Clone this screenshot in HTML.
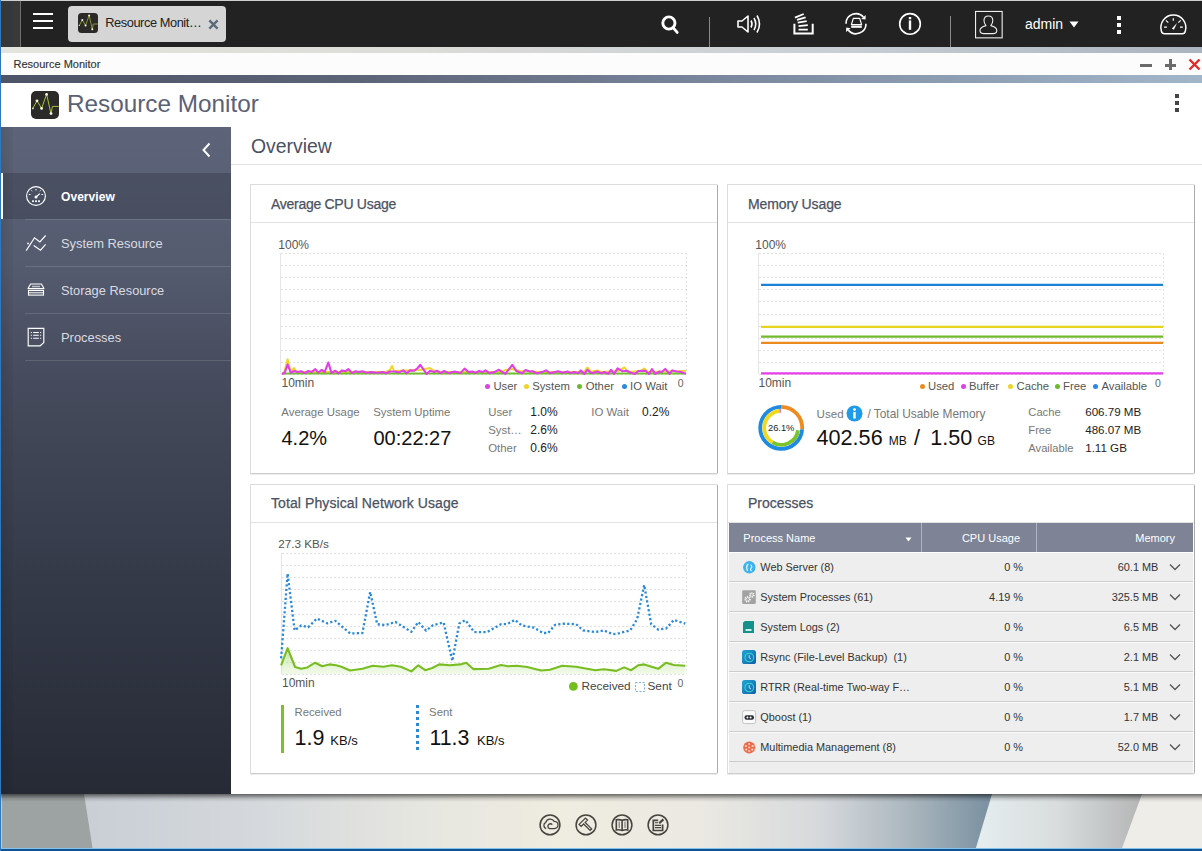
<!DOCTYPE html>
<html><head><meta charset="utf-8"><style>
html,body{margin:0;padding:0;}
body{width:1202px;height:851px;position:relative;overflow:hidden;background:#fff;font-family:"Liberation Sans",sans-serif;}
.r{position:absolute;}
.t{position:absolute;white-space:nowrap;}
</style></head><body>
<div class="r" style="left:0px;top:794px;width:1202px;height:57px;background:linear-gradient(to right,#c4cad2 0px,#d4d8dc 250px,#e6e6e0 420px,#efece0 560px,#ebe9e2 700px,#d6d9dc 820px,#aab6be 910px,#7d93a3 985px);"></div>
<svg class="r" style="left:0;top:794px" width="1202" height="57"><defs><linearGradient id="wg2" x1="0" x2="1"><stop offset="0" stop-color="#e6eef0"/><stop offset="0.5" stop-color="#d8dcdc"/><stop offset="1" stop-color="#b4b6b6"/></linearGradient></defs><polygon points="2,0 84,0 93,57 2,57" fill="#9da3a3"/><polygon points="992,0 1143,0 1122,57 975,57" fill="url(#wg2)"/><polygon points="1142,0 1202,0 1202,57 1121,57" fill="#eeede8"/></svg>
<div class="r" style="left:0px;top:794px;width:1202px;height:8px;background:linear-gradient(to bottom,rgba(0,0,0,0.55),rgba(0,0,0,0.12) 60%,rgba(0,0,0,0));"></div>
<div class="r" style="left:0px;top:848px;width:1202px;height:1.5px;background:#86c0ec;"></div>
<div class="r" style="left:0px;top:849px;width:1202px;height:2px;background:#0c5494;"></div>
<div class="r" style="left:0px;top:0px;width:1202px;height:1px;background:#cfcfcf;"></div>
<div class="r" style="left:0px;top:1px;width:1202px;height:45.6px;background:#222222;"></div>
<div class="r" style="left:1px;top:1px;width:19px;height:45.6px;background:linear-gradient(to right,#3a3634,#3c3530 20%,#2f3944 45%,#3d3834 70%,#383a3c);"></div>
<div class="r" style="left:20px;top:1px;width:1px;height:45.6px;background:#6e6e6e;"></div>
<div class="r" style="left:33px;top:12.7px;width:19.5px;height:2.2px;background:#fff;"></div>
<div class="r" style="left:33px;top:19.7px;width:19.5px;height:2.2px;background:#fff;"></div>
<div class="r" style="left:33px;top:26.8px;width:19.5px;height:2.2px;background:#fff;"></div>
<div class="r" style="left:68px;top:6px;width:158px;height:36px;background:#d5d5d5;border-radius:4px;"></div>
<svg class="r" style="left:78px;top:13px" width="20" height="20" viewBox="0 0 28 28"><rect x="0" y="0" width="28" height="28" rx="5" fill="#2b2a28"/><polyline points="1.8,17.4 6,9.8 10.6,17.4 15.6,3.2 20,22.8 21.4,15.4 27.8,15.4" fill="none" stroke="#a6c03e" stroke-width="1"/><circle cx="6" cy="9.8" r="1.4" fill="#f4f8e0"/><circle cx="10.6" cy="17.4" r="1.4" fill="#f4f8e0"/><circle cx="15.6" cy="3.4" r="1.4" fill="#f4f8e0"/><circle cx="20" cy="22.6" r="1.4" fill="#f4f8e0"/><circle cx="1.9" cy="17.4" r="0.9" fill="#d8e4b0"/></svg>
<div class="t" style="left:105.2px;top:15px;font-size:12.8px;line-height:15px;color:#222;font-weight:normal;letter-spacing:-0.42px;">Resource Monit…</div>
<svg class="r" style="left:209px;top:20px;overflow:visible" width="9" height="9" viewBox="0 0 9 9"><path d="M1.2 1.2 L7.8 7.8 M7.8 1.2 L1.2 7.8" stroke="#5b6b7b" stroke-width="2.4" stroke-linecap="square"/></svg>
<svg class="r" style="left:661px;top:14.6px;overflow:visible" width="20" height="20" viewBox="0 0 20 20"><circle cx="7.9" cy="8" r="6.1" fill="none" stroke="#fff" stroke-width="2.9"/><path d="M12.3 12.8 L16.2 17.4" stroke="#fff" stroke-width="2.8" stroke-linecap="round"/></svg>
<div class="r" style="left:709px;top:16.7px;width:1.2px;height:29.9px;background:#8a8a8a;"></div>
<svg class="r" style="left:736px;top:13px;overflow:visible" width="27" height="22" viewBox="0 0 27 22"><path d="M2 8 H6 L12 3 V19 L6 14 H2 Z" fill="none" stroke="#fff" stroke-width="1.6" stroke-linejoin="round"/><path d="M15 7.5 Q17 11 15 14.5" fill="none" stroke="#fff" stroke-width="1.6"/><path d="M18 5 Q21.5 11 18 17" fill="none" stroke="#fff" stroke-width="1.6"/><path d="M21 2.5 Q26 11 21 19.5" fill="none" stroke="#fff" stroke-width="1.6"/></svg>
<svg class="r" style="left:793px;top:13px;overflow:visible" width="22" height="22" viewBox="0 0 22 22"><path d="M1.4 10.8 V20.4 H19.7 V10.8" fill="none" stroke="#fff" stroke-width="2"/><path d="M5.5 16.7 H14.8 M5.5 13.1 L14.8 12.2 M4.7 9.7 L13.7 8.1 M4 6.8 L12.6 4.4 M1.9 4.6 L10.7 1" stroke="#fff" stroke-width="1.8"/></svg>
<svg class="r" style="left:844px;top:12px;overflow:visible" width="25" height="24" viewBox="0 0 25 24"><path d="M2.00 11.70 A10 10 0 0 1 19.43 5.01" fill="none" stroke="#fff" stroke-width="1.6"/><path d="M22.00 11.70 A10 10 0 0 1 4.34 18.13" fill="none" stroke="#fff" stroke-width="1.6"/><polygon points="21.64,7.46 21.66,3.00 17.20,7.02" fill="#fff"/><polygon points="2.22,15.60 2.04,20.06 6.64,16.20" fill="#fff"/><path d="M9.3 6.4 H15.7 L17.6 12.6 H7.4 Z" fill="none" stroke="#fff" stroke-width="1.2" stroke-linejoin="round"/><rect x="7.2" y="13.6" width="10.6" height="2.2" fill="#fff"/></svg>
<svg class="r" style="left:898px;top:12px;overflow:visible" width="24" height="24" viewBox="0 0 24 24"><circle cx="12" cy="11.9" r="10.3" fill="none" stroke="#fff" stroke-width="1.6"/><rect x="10.8" y="8.4" width="2.4" height="9.4" fill="#fff"/><rect x="10.8" y="5" width="2.4" height="2.3" fill="#fff"/></svg>
<div class="r" style="left:950px;top:16.3px;width:1.2px;height:30.3px;background:#8a8a8a;"></div>
<svg class="r" style="left:975px;top:11px;overflow:visible" width="28" height="27" viewBox="0 0 28 27"><rect x="0.55" y="0.45" width="26.6" height="26.4" fill="none" stroke="#eee" stroke-width="1.1"/><path d="M11 14.6 C9.5 13 9 11.5 9 9.5 C9 6.7 11 5 13.4 5 C15.8 5 17.8 6.7 17.8 9.5 C17.8 11.5 17.3 13 15.8 14.6 C19.5 15.5 21.8 17.5 21.8 19.6 C21.8 21.6 20.5 22.6 18.5 22.6 H8.3 C6.3 22.6 5 21.6 5 19.6 C5 17.5 7.3 15.5 11 14.6 Z" fill="none" stroke="#eee" stroke-width="1.1" stroke-linejoin="round"/></svg>
<div class="t" style="left:1025px;top:16px;font-size:14px;line-height:16px;color:#fff;font-weight:normal;">admin</div>
<svg class="r" style="left:1069px;top:21px;overflow:visible" width="10" height="7" viewBox="0 0 10 7"><path d="M0.5 0.5 H9.5 L5 6.5 Z" fill="#fff"/></svg>
<div class="r" style="left:1117px;top:16px;width:4px;height:4px;background:#fff;"></div>
<div class="r" style="left:1117px;top:23px;width:4px;height:4px;background:#fff;"></div>
<div class="r" style="left:1117px;top:30px;width:4px;height:4px;background:#fff;"></div>
<svg class="r" style="left:1159px;top:13px;overflow:visible" width="29" height="23" viewBox="0 0 29 23"><path d="M5.5 20.8 H23.2 Q25.8 20.8 26.3 18.2 A12.5 12.5 0 1 0 2.4 18.2 Q2.9 20.8 5.5 20.8 Z" fill="none" stroke="#fff" stroke-width="1.5" stroke-linejoin="round"/><path d="M14.3 5.3 V7.7 M6.9 7.4 L9.3 9.6 M21.7 7.4 L19.3 9.6 M5.1 14.2 H7.9 M21 14.2 H23.8" stroke="#fff" stroke-width="1.2"/><polygon points="12.9,15.6 14.9,16.7 18,10" fill="#fff"/></svg>
<div class="r" style="left:0px;top:46.6px;width:1202px;height:6.4px;background:linear-gradient(to right,#e4e4de,#dcdcd8 35%,#c8ced4 70%,#aab4c0);"></div>
<div class="r" style="left:0px;top:53px;width:1202px;height:22px;background:#fcfcfc;"></div>
<div class="t" style="left:13.5px;top:58px;font-size:11px;line-height:12px;color:#333;font-weight:normal;-webkit-text-stroke:0.15px #333;">Resource Monitor</div>
<div class="r" style="left:1140px;top:63.5px;width:12px;height:3px;background:#6a6a6a;"></div>
<div class="r" style="left:1165px;top:63.5px;width:11px;height:3px;background:#6a6a6a;"></div>
<div class="r" style="left:1169px;top:59px;width:3px;height:11px;background:#6a6a6a;"></div>
<svg class="r" style="left:1188px;top:58px;overflow:visible" width="13" height="13" viewBox="0 0 13 13"><path d="M1.5 1.5 L11.5 11.5 M11.5 1.5 L1.5 11.5" stroke="#e02a2a" stroke-width="2.4"/></svg>
<div class="r" style="left:0px;top:75px;width:1202px;height:8px;background:linear-gradient(to right,#4e5468,#5c6478 30%,#7a879d 60%,#a2b6ca);"></div>
<div class="r" style="left:0px;top:83px;width:1202px;height:44px;background:#ffffff;"></div>
<svg class="r" style="left:31px;top:91px" width="28" height="28" viewBox="0 0 28 28"><rect x="0" y="0" width="28" height="28" rx="5" fill="#2b2a28"/><polyline points="1.8,17.4 6,9.8 10.6,17.4 15.6,3.2 20,22.8 21.4,15.4 27.8,15.4" fill="none" stroke="#a6c03e" stroke-width="1"/><circle cx="6" cy="9.8" r="1.4" fill="#f4f8e0"/><circle cx="10.6" cy="17.4" r="1.4" fill="#f4f8e0"/><circle cx="15.6" cy="3.4" r="1.4" fill="#f4f8e0"/><circle cx="20" cy="22.6" r="1.4" fill="#f4f8e0"/><circle cx="1.9" cy="17.4" r="0.9" fill="#d8e4b0"/></svg>
<div class="t" style="left:67px;top:90px;font-size:24.3px;line-height:27px;color:#5a6175;font-weight:normal;">Resource Monitor</div>
<div class="r" style="left:1175px;top:94px;width:4px;height:4px;background:#444;"></div>
<div class="r" style="left:1175px;top:101px;width:4px;height:4px;background:#444;"></div>
<div class="r" style="left:1175px;top:108px;width:4px;height:4px;background:#444;"></div>
<div class="r" style="left:0px;top:127px;width:231px;height:667px;background:linear-gradient(to bottom,#5d6479 0px,#555b6f 140px,#474c5e 240px,#353a49 450px,#262a35 667px);"></div>
<div class="r" style="left:1px;top:127px;width:12px;height:667px;background:linear-gradient(to right,rgba(0,0,0,0.10),rgba(0,0,0,0.03));"></div>
<div class="r" style="left:1px;top:173px;width:230px;height:46px;background:rgba(20,24,34,0.22);"></div>
<div class="r" style="left:1px;top:173px;width:2px;height:46px;background:#ffffff;"></div>
<div class="r" style="left:25px;top:219px;width:206px;height:1px;background:rgba(255,255,255,0.13);"></div>
<div class="r" style="left:25px;top:266px;width:206px;height:1px;background:rgba(255,255,255,0.13);"></div>
<div class="r" style="left:25px;top:313px;width:206px;height:1px;background:rgba(255,255,255,0.13);"></div>
<div class="r" style="left:25px;top:360px;width:206px;height:1px;background:rgba(255,255,255,0.13);"></div>
<svg class="r" style="left:201px;top:142px;overflow:visible" width="10" height="16" viewBox="0 0 10 16"><path d="M8.5 1.5 L2.5 8 L8.5 14.5" fill="none" stroke="#fff" stroke-width="2"/></svg>
<svg class="r" style="left:25px;top:185px;overflow:visible" width="22" height="22" viewBox="0 0 22 22"><circle cx="11" cy="10.95" r="9.4" fill="none" stroke="#fff" stroke-width="1.15"/><path d="M11 12 L14.8 8.6" stroke="#fff" stroke-width="1.2"/><circle cx="11" cy="11.9" r="1.5" fill="#fff"/><path d="M11 4.1 V5.6 M3.8 9.5 H5.6 M16.4 9.5 H18.2" stroke="#fff" stroke-width="1.1" opacity="0.9"/><path d="M6.2 5.3 L7.3 6.4 M15.8 5.3 L14.7 6.4" stroke="#fff" stroke-width="1" opacity="0.8"/><rect x="7.1" y="15.3" width="1.8" height="1.8" fill="#fff"/><rect x="10.1" y="15.3" width="1.8" height="1.8" fill="#fff"/><rect x="13.1" y="15.3" width="1.8" height="1.8" fill="#fff"/></svg>
<div class="t" style="left:61px;top:190px;font-size:12.1px;line-height:14px;color:#ffffff;font-weight:bold;">Overview</div>
<svg class="r" style="left:25px;top:234px;overflow:visible" width="22" height="18" viewBox="0 0 22 18"><path d="M1.2 16.6 L9.5 3.8 L14.9 7.9 L20.6 1.5" fill="none" stroke="#fff" stroke-width="1.15"/><path d="M8.7 11.5 L15.5 16.2 L20.6 10.4" fill="none" stroke="#fff" stroke-width="1.15"/><circle cx="3" cy="9.4" r="0.9" fill="#fff"/></svg>
<div class="t" style="left:61px;top:236px;font-size:12.9px;line-height:15px;color:#d9dbe2;font-weight:normal;">System Resource</div>
<svg class="r" style="left:27px;top:282px;overflow:visible" width="18" height="14" viewBox="0 0 18 14"><path d="M1 6.6 L3.6 2 H14.4 L17 6.6 Z" fill="none" stroke="#fff" stroke-width="1.1" stroke-linejoin="round"/><path d="M5 4.5 H13" stroke="#fff" stroke-width="1.6" opacity="0.6"/><rect x="1.5" y="8.5" width="15" height="4.6" fill="none" stroke="#fff" stroke-width="1.1"/><path d="M1.5 10.8 H16.5" stroke="#fff" stroke-width="1"/></svg>
<div class="t" style="left:61px;top:283px;font-size:12.8px;line-height:15px;color:#d9dbe2;font-weight:normal;">Storage Resource</div>
<svg class="r" style="left:27px;top:327px;overflow:visible" width="18" height="20" viewBox="0 0 18 20"><path d="M1.2 1.4 H16.8 V15.6 L13.2 18.8 H1.2 Z" fill="none" stroke="#fff" stroke-width="1.15" stroke-linejoin="miter"/><path d="M3.8 5.5 H4.9 M6.2 5.5 H11.8 M13.1 5.5 H14.2 M3.8 8.3 H4.9 M6.2 8.3 H11.8 M13.1 8.3 H14.2 M3.8 11.3 H4.9 M6.2 11.3 H11.8 M13.1 11.3 H14.2" stroke="#fff" stroke-width="1.1"/></svg>
<div class="t" style="left:61px;top:330px;font-size:12.9px;line-height:15px;color:#d9dbe2;font-weight:normal;">Processes</div>
<div class="r" style="left:231px;top:127px;width:971px;height:667px;background:#ffffff;"></div>
<div class="t" style="left:251px;top:135px;font-size:19.4px;line-height:22px;color:#4a5161;font-weight:normal;">Overview</div>
<div class="r" style="left:231px;top:164px;width:971px;height:1px;background:#e3e3e3;"></div>
<div class="r" style="left:250px;top:184px;width:468px;height:290px;background:#fff;border:1px solid #dcdcdc;border-right-color:#ababab;border-bottom-color:#cdcdcd;border-radius:0 2px 2px 0;box-sizing:border-box;box-shadow:0 1px 0 rgba(0,0,0,0.07);"></div>
<div class="r" style="left:251px;top:222px;width:466px;height:1px;background:#e2e2e2;"></div>
<div class="t" style="left:271px;top:196px;font-size:14px;line-height:16px;color:#4b5262;font-weight:normal;-webkit-text-stroke:0.25px #4b5262;letter-spacing:-0.28px;">Average CPU Usage</div>
<div class="r" style="left:727px;top:184px;width:468px;height:290px;background:#fff;border:1px solid #dcdcdc;border-right-color:#ababab;border-bottom-color:#cdcdcd;border-radius:0 2px 2px 0;box-sizing:border-box;box-shadow:0 1px 0 rgba(0,0,0,0.07);"></div>
<div class="r" style="left:728px;top:222px;width:466px;height:1px;background:#e2e2e2;"></div>
<div class="t" style="left:748px;top:196px;font-size:14px;line-height:16px;color:#4b5262;font-weight:normal;-webkit-text-stroke:0.25px #4b5262;letter-spacing:-0.12px;">Memory Usage</div>
<div class="r" style="left:250px;top:484px;width:468px;height:290px;background:#fff;border:1px solid #dcdcdc;border-right-color:#ababab;border-bottom-color:#cdcdcd;border-radius:0 2px 2px 0;box-sizing:border-box;box-shadow:0 1px 0 rgba(0,0,0,0.07);"></div>
<div class="r" style="left:251px;top:522px;width:466px;height:1px;background:#e2e2e2;"></div>
<div class="t" style="left:271px;top:495px;font-size:14px;line-height:16px;color:#4b5262;font-weight:normal;-webkit-text-stroke:0.25px #4b5262;letter-spacing:0.09px;">Total Physical Network Usage</div>
<div class="r" style="left:727px;top:484px;width:468px;height:290px;background:#fff;border:1px solid #dcdcdc;border-right-color:#ababab;border-bottom-color:#cdcdcd;border-radius:0 2px 2px 0;box-sizing:border-box;box-shadow:0 1px 0 rgba(0,0,0,0.07);"></div>
<div class="r" style="left:728px;top:522px;width:466px;height:1px;background:#e2e2e2;"></div>
<div class="t" style="left:748px;top:495px;font-size:14px;line-height:16px;color:#4b5262;font-weight:normal;-webkit-text-stroke:0.25px #4b5262;letter-spacing:0px;">Processes</div>
<svg class="r" style="left:0;top:0" width="1202" height="851"><line x1="280" y1="253.5" x2="686" y2="253.5" stroke="#e0e0e0" stroke-width="1" stroke-dasharray="2 2" stroke-dashoffset="-1"/><line x1="280" y1="265.5" x2="686" y2="265.5" stroke="#e0e0e0" stroke-width="1" stroke-dasharray="2 2" stroke-dashoffset="-1"/><line x1="280" y1="277.5" x2="686" y2="277.5" stroke="#e0e0e0" stroke-width="1" stroke-dasharray="2 2" stroke-dashoffset="-1"/><line x1="280" y1="289.5" x2="686" y2="289.5" stroke="#e0e0e0" stroke-width="1" stroke-dasharray="2 2" stroke-dashoffset="-1"/><line x1="280" y1="301.5" x2="686" y2="301.5" stroke="#e0e0e0" stroke-width="1" stroke-dasharray="2 2" stroke-dashoffset="-1"/><line x1="280" y1="314.5" x2="686" y2="314.5" stroke="#e0e0e0" stroke-width="1" stroke-dasharray="2 2" stroke-dashoffset="-1"/><line x1="280" y1="326.5" x2="686" y2="326.5" stroke="#e0e0e0" stroke-width="1" stroke-dasharray="2 2" stroke-dashoffset="-1"/><line x1="280" y1="338.5" x2="686" y2="338.5" stroke="#e0e0e0" stroke-width="1" stroke-dasharray="2 2" stroke-dashoffset="-1"/><line x1="280" y1="350.5" x2="686" y2="350.5" stroke="#e0e0e0" stroke-width="1" stroke-dasharray="2 2" stroke-dashoffset="-1"/><line x1="280" y1="362.5" x2="686" y2="362.5" stroke="#e0e0e0" stroke-width="1" stroke-dasharray="2 2" stroke-dashoffset="-1"/><line x1="280" y1="374.5" x2="686" y2="374.5" stroke="#e0e0e0" stroke-width="1" stroke-dasharray="2 2" stroke-dashoffset="-1"/><line x1="280.5" y1="253" x2="280.5" y2="374" stroke="#e6e6e6" stroke-width="1"/><line x1="686.5" y1="253" x2="686.5" y2="374" stroke="#e4e4e4" stroke-width="1" stroke-dasharray="2 2"/></svg>
<div class="t" style="left:278.3px;top:238px;font-size:12px;line-height:14px;color:#555;font-weight:normal;">100%</div>
<div class="t" style="left:281.5px;top:376px;font-size:12px;line-height:14px;color:#555;font-weight:normal;">10min</div>
<svg class="r" style="left:0px;top:0px;overflow:visible" width="1202" height="851" viewBox="0 0 1202 851"><polyline points="282.0,374.0 284.4,372.0 287.6,359.3 290.8,372.0 294.0,368.0 297.0,372.0 380.0,372.0 386.0,372.0 390.0,370.0 392.0,366.0 394.0,371.0 420.0,370.0 430.0,368.0 436.0,372.0 500.0,372.0 506.0,370.0 512.0,369.0 520.0,371.0 540.0,372.0 584.0,372.0 587.3,367.5 591.0,372.0 597.2,370.4 601.0,372.0 618.0,371.0 624.5,367.5 628.0,372.0 640.0,371.0 644.3,368.6 648.0,372.0 686.0,371.0" fill="none" stroke="#f1d52a" stroke-width="2" stroke-linejoin="round"/><line x1="282" y1="373.5" x2="686" y2="373.5" stroke="#72bf2c" stroke-width="2"/><polyline points="282.0,374.0 284.4,373.3 287.6,364.6 290.8,372.7 294.3,371.0 297.2,372.1 301.3,371.2 304.8,373.1 308.3,371.0 311.8,371.9 315.3,369.2 318.2,372.7 321.7,369.8 324.6,372.1 328.3,362.6 331.6,373.1 335.1,370.7 338.6,373.3 342.1,370.4 345.6,371.2 348.5,369.2 352.0,373.1 355.5,371.2 358.9,372.1 362.4,371.2 366.5,372.7 371.2,372.1 377.0,372.7 382.8,372.1 386.3,373.3 389.8,371.5 394.5,371.5 399.1,372.4 403.2,370.4 406.7,373.1 410.2,370.4 414.3,370.7 417.8,368.0 420.2,364.9 426.6,373.9 430.1,370.7 434.0,371.9 437.1,370.7 440.6,373.1 444.1,371.0 448.8,373.1 454.6,371.5 460.4,373.1 464.5,368.6 468.6,372.1 472.1,371.5 475.6,372.7 479.1,371.0 482.6,372.1 485.5,370.4 489.5,373.1 494.2,372.1 498.9,369.8 505.3,373.9 512.3,364.9 516.3,371.0 522.2,373.3 525.6,370.0 529.7,371.5 532.6,371.2 536.7,373.3 542.0,372.1 546.0,370.4 550.1,373.1 554.8,372.1 558.2,371.2 562.8,372.7 567.5,371.5 571.0,373.1 574.5,371.9 578.0,373.3 580.9,370.4 584.4,373.9 587.3,369.8 591.9,373.3 597.2,371.5 601.2,373.3 604.7,372.1 608.2,373.9 611.1,369.8 614.1,373.9 617.6,368.4 622.2,371.2 626.9,370.7 630.9,372.7 635.0,373.9 638.5,371.0 645.5,370.7 649.0,373.9 651.9,369.2 655.4,373.9 659.5,371.5 661.8,372.1 665.3,368.9 669.4,373.9 672.3,370.4 677.0,371.5 681.0,371.9 685.7,373.9" fill="none" stroke="#e03ee6" stroke-width="2.1" stroke-linejoin="round"/></svg>
<svg class="r" style="left:483.9px;top:382.8px;overflow:visible" width="7.0" height="7.0" viewBox="0 0 7.0 7.0"><circle cx="3.5" cy="3.5" r="2.5" fill="#e040e6"/></svg>
<div class="t" style="left:493.4px;top:380px;font-size:11.3px;line-height:12px;color:#555;font-weight:normal;">User</div>
<svg class="r" style="left:522.9px;top:382.8px;overflow:visible" width="7.0" height="7.0" viewBox="0 0 7.0 7.0"><circle cx="3.5" cy="3.5" r="2.5" fill="#ecd42c"/></svg>
<div class="t" style="left:532.2px;top:380px;font-size:11.3px;line-height:12px;color:#555;font-weight:normal;">System</div>
<svg class="r" style="left:576.3px;top:382.8px;overflow:visible" width="7.0" height="7.0" viewBox="0 0 7.0 7.0"><circle cx="3.5" cy="3.5" r="2.5" fill="#6cbc2a"/></svg>
<div class="t" style="left:585.7px;top:380px;font-size:11.3px;line-height:12px;color:#555;font-weight:normal;">Other</div>
<svg class="r" style="left:620.8px;top:382.8px;overflow:visible" width="7.0" height="7.0" viewBox="0 0 7.0 7.0"><circle cx="3.5" cy="3.5" r="2.5" fill="#2a8ae0"/></svg>
<div class="t" style="left:630.1px;top:380px;font-size:11.3px;line-height:12px;color:#555;font-weight:normal;">IO Wait</div>
<div class="t" style="left:677.7px;top:377px;font-size:10.5px;line-height:12px;color:#666;font-weight:normal;">0</div>
<div class="t" style="left:281.3px;top:406px;font-size:11.4px;line-height:12px;color:#777;font-weight:normal;">Average Usage</div>
<div class="t" style="left:373.2px;top:406px;font-size:11.4px;line-height:12px;color:#777;font-weight:normal;">System Uptime</div>
<div class="t" style="left:281.5px;top:427px;font-size:20px;line-height:22px;color:#111;font-weight:normal;">4.2%</div>
<div class="t" style="left:373.5px;top:427px;font-size:20px;line-height:22px;color:#111;font-weight:normal;">00:22:27</div>
<div class="t" style="left:488.2px;top:406px;font-size:11.4px;line-height:12px;color:#777;font-weight:normal;">User</div>
<div class="t" style="left:530.3px;top:405px;font-size:12px;line-height:14px;color:#222;font-weight:normal;">1.0%</div>
<div class="t" style="left:488.2px;top:424px;font-size:11.4px;line-height:12px;color:#777;font-weight:normal;">Syst…</div>
<div class="t" style="left:530.3px;top:423px;font-size:12px;line-height:14px;color:#222;font-weight:normal;">2.6%</div>
<div class="t" style="left:488.2px;top:442px;font-size:11.4px;line-height:12px;color:#777;font-weight:normal;">Other</div>
<div class="t" style="left:530.3px;top:441px;font-size:12px;line-height:14px;color:#222;font-weight:normal;">0.6%</div>
<div class="t" style="left:591.3px;top:406px;font-size:11.4px;line-height:12px;color:#777;font-weight:normal;">IO Wait</div>
<div class="t" style="left:642px;top:405px;font-size:12px;line-height:14px;color:#222;font-weight:normal;">0.2%</div>
<svg class="r" style="left:0;top:0" width="1202" height="851"><line x1="758" y1="253.5" x2="1163" y2="253.5" stroke="#e0e0e0" stroke-width="1" stroke-dasharray="2 2" stroke-dashoffset="-1"/><line x1="758" y1="265.5" x2="1163" y2="265.5" stroke="#e0e0e0" stroke-width="1" stroke-dasharray="2 2" stroke-dashoffset="-1"/><line x1="758" y1="277.5" x2="1163" y2="277.5" stroke="#e0e0e0" stroke-width="1" stroke-dasharray="2 2" stroke-dashoffset="-1"/><line x1="758" y1="289.5" x2="1163" y2="289.5" stroke="#e0e0e0" stroke-width="1" stroke-dasharray="2 2" stroke-dashoffset="-1"/><line x1="758" y1="301.5" x2="1163" y2="301.5" stroke="#e0e0e0" stroke-width="1" stroke-dasharray="2 2" stroke-dashoffset="-1"/><line x1="758" y1="314.5" x2="1163" y2="314.5" stroke="#e0e0e0" stroke-width="1" stroke-dasharray="2 2" stroke-dashoffset="-1"/><line x1="758" y1="326.5" x2="1163" y2="326.5" stroke="#e0e0e0" stroke-width="1" stroke-dasharray="2 2" stroke-dashoffset="-1"/><line x1="758" y1="338.5" x2="1163" y2="338.5" stroke="#e0e0e0" stroke-width="1" stroke-dasharray="2 2" stroke-dashoffset="-1"/><line x1="758" y1="350.5" x2="1163" y2="350.5" stroke="#e0e0e0" stroke-width="1" stroke-dasharray="2 2" stroke-dashoffset="-1"/><line x1="758" y1="362.5" x2="1163" y2="362.5" stroke="#e0e0e0" stroke-width="1" stroke-dasharray="2 2" stroke-dashoffset="-1"/><line x1="758" y1="374.5" x2="1163" y2="374.5" stroke="#e0e0e0" stroke-width="1" stroke-dasharray="2 2" stroke-dashoffset="-1"/><line x1="758.5" y1="253" x2="758.5" y2="374" stroke="#e6e6e6" stroke-width="1"/><line x1="1163.5" y1="253" x2="1163.5" y2="374" stroke="#e4e4e4" stroke-width="1" stroke-dasharray="2 2"/></svg>
<div class="t" style="left:755.3px;top:238px;font-size:12px;line-height:14px;color:#555;font-weight:normal;">100%</div>
<div class="t" style="left:758.5px;top:376px;font-size:12px;line-height:14px;color:#555;font-weight:normal;">10min</div>
<svg class="r" style="left:0px;top:0px;overflow:visible" width="1202" height="851" viewBox="0 0 1202 851"><line x1="761" y1="284.8" x2="1163" y2="284.8" stroke="#1b82d8" stroke-width="2.2"/><line x1="761" y1="326.8" x2="1163" y2="326.8" stroke="#e6d41e" stroke-width="2.2"/><line x1="761" y1="336.6" x2="1163" y2="336.6" stroke="#74b92a" stroke-width="2.2"/><line x1="761" y1="342.8" x2="1163" y2="342.8" stroke="#ec8a22" stroke-width="2.2"/><line x1="761" y1="373.4" x2="1163" y2="373.4" stroke="#e63ee8" stroke-width="2.2"/></svg>
<svg class="r" style="left:918.5px;top:382.8px;overflow:visible" width="7.0" height="7.0" viewBox="0 0 7.0 7.0"><circle cx="3.5" cy="3.5" r="2.5" fill="#ec8a22"/></svg>
<div class="t" style="left:928px;top:380px;font-size:11.3px;line-height:12px;color:#555;font-weight:normal;">Used</div>
<svg class="r" style="left:959.5px;top:382.8px;overflow:visible" width="7.0" height="7.0" viewBox="0 0 7.0 7.0"><circle cx="3.5" cy="3.5" r="2.5" fill="#e040e6"/></svg>
<div class="t" style="left:969px;top:380px;font-size:11.3px;line-height:12px;color:#555;font-weight:normal;">Buffer</div>
<svg class="r" style="left:1007.1px;top:382.8px;overflow:visible" width="7.0" height="7.0" viewBox="0 0 7.0 7.0"><circle cx="3.5" cy="3.5" r="2.5" fill="#ecd42c"/></svg>
<div class="t" style="left:1016.5px;top:380px;font-size:11.3px;line-height:12px;color:#555;font-weight:normal;">Cache</div>
<svg class="r" style="left:1053.5px;top:382.8px;overflow:visible" width="7.0" height="7.0" viewBox="0 0 7.0 7.0"><circle cx="3.5" cy="3.5" r="2.5" fill="#6cbc2a"/></svg>
<div class="t" style="left:1063px;top:380px;font-size:11.3px;line-height:12px;color:#555;font-weight:normal;">Free</div>
<svg class="r" style="left:1091.5px;top:382.8px;overflow:visible" width="7.0" height="7.0" viewBox="0 0 7.0 7.0"><circle cx="3.5" cy="3.5" r="2.5" fill="#2a8ae0"/></svg>
<div class="t" style="left:1101.5px;top:380px;font-size:11.3px;line-height:12px;color:#555;font-weight:normal;">Available</div>
<div class="t" style="left:1155px;top:377px;font-size:10.5px;line-height:12px;color:#666;font-weight:normal;">0</div>
<svg class="r" style="left:0px;top:0px;overflow:visible" width="1202" height="851" viewBox="0 0 1202 851"><path d="M781.20 406.80 A21 21 0 0 1 802.15 429.26" fill="none" stroke="#ee8a1e" stroke-width="3.8"/><path d="M802.15 429.26 A21 21 0 1 1 781.20 406.80" fill="none" stroke="#1f8ae2" stroke-width="3.8"/><path d="M798.03 430.17 A17 17 0 0 1 772.44 442.37" fill="none" stroke="#7cc22a" stroke-width="3.8"/><path d="M772.44 442.37 A17 17 0 0 1 779.42 410.89" fill="none" stroke="#f0d81e" stroke-width="3.8"/><path d="M779.42 410.89 A17 17 0 0 1 780.90 410.80" fill="none" stroke="#d070d0" stroke-width="3.8"/></svg>
<div class="t" style="left:581.2px;width:400px;text-align:center;top:423px;font-size:9.3px;line-height:10px;color:#222;font-weight:normal;">26.1%</div>
<div class="t" style="left:816.6px;top:408px;font-size:11.6px;line-height:12px;color:#777;font-weight:normal;">Used</div>
<svg class="r" style="left:846px;top:405px;overflow:visible" width="17" height="17" viewBox="0 0 17 17"><circle cx="8.5" cy="8.5" r="8" fill="#1e9be8"/><rect x="7.3" y="7" width="2.4" height="6.5" fill="#fff"/><circle cx="8.5" cy="4.6" r="1.4" fill="#fff"/></svg>
<div class="t" style="left:867.4px;top:407px;font-size:11.9px;line-height:14px;color:#777;font-weight:normal;">/ Total Usable Memory</div>
<div class="t" style="left:816.6px;top:425px;font-size:21.6px;line-height:25px;color:#111;font-weight:normal;">402.56</div>
<div class="t" style="left:888.7px;top:434px;font-size:12px;line-height:14px;color:#111;font-weight:normal;">MB</div>
<div class="t" style="left:914px;top:425px;font-size:21.6px;line-height:25px;color:#111;font-weight:normal;">/</div>
<div class="t" style="left:930.2px;top:425px;font-size:21.6px;line-height:25px;color:#111;font-weight:normal;">1.50</div>
<div class="t" style="left:977.6px;top:434px;font-size:12px;line-height:14px;color:#111;font-weight:normal;">GB</div>
<div class="t" style="left:1028.3px;top:406px;font-size:11.2px;line-height:12px;color:#777;font-weight:normal;">Cache</div>
<div class="t" style="left:1085.2px;top:406px;font-size:11.6px;line-height:12px;color:#222;font-weight:normal;">606.79 MB</div>
<div class="t" style="left:1028.3px;top:424px;font-size:11.2px;line-height:12px;color:#777;font-weight:normal;">Free</div>
<div class="t" style="left:1085.2px;top:424px;font-size:11.6px;line-height:12px;color:#222;font-weight:normal;">486.07 MB</div>
<div class="t" style="left:1028.3px;top:442px;font-size:11.2px;line-height:12px;color:#777;font-weight:normal;">Available</div>
<div class="t" style="left:1085.2px;top:442px;font-size:11.6px;line-height:12px;color:#222;font-weight:normal;">1.11 GB</div>
<svg class="r" style="left:0;top:0" width="1202" height="851"><line x1="281" y1="553.5" x2="686" y2="553.5" stroke="#e0e0e0" stroke-width="1" stroke-dasharray="2 2" stroke-dashoffset="-1"/><line x1="281" y1="565.5" x2="686" y2="565.5" stroke="#e0e0e0" stroke-width="1" stroke-dasharray="2 2" stroke-dashoffset="-1"/><line x1="281" y1="577.5" x2="686" y2="577.5" stroke="#e0e0e0" stroke-width="1" stroke-dasharray="2 2" stroke-dashoffset="-1"/><line x1="281" y1="589.5" x2="686" y2="589.5" stroke="#e0e0e0" stroke-width="1" stroke-dasharray="2 2" stroke-dashoffset="-1"/><line x1="281" y1="601.5" x2="686" y2="601.5" stroke="#e0e0e0" stroke-width="1" stroke-dasharray="2 2" stroke-dashoffset="-1"/><line x1="281" y1="614.5" x2="686" y2="614.5" stroke="#e0e0e0" stroke-width="1" stroke-dasharray="2 2" stroke-dashoffset="-1"/><line x1="281" y1="626.5" x2="686" y2="626.5" stroke="#e0e0e0" stroke-width="1" stroke-dasharray="2 2" stroke-dashoffset="-1"/><line x1="281" y1="638.5" x2="686" y2="638.5" stroke="#e0e0e0" stroke-width="1" stroke-dasharray="2 2" stroke-dashoffset="-1"/><line x1="281" y1="650.5" x2="686" y2="650.5" stroke="#e0e0e0" stroke-width="1" stroke-dasharray="2 2" stroke-dashoffset="-1"/><line x1="281" y1="662.5" x2="686" y2="662.5" stroke="#e0e0e0" stroke-width="1" stroke-dasharray="2 2" stroke-dashoffset="-1"/><line x1="281" y1="674.5" x2="686" y2="674.5" stroke="#e0e0e0" stroke-width="1" stroke-dasharray="2 2" stroke-dashoffset="-1"/><line x1="281.5" y1="553" x2="281.5" y2="674" stroke="#e6e6e6" stroke-width="1"/><line x1="686.5" y1="553" x2="686.5" y2="674" stroke="#e4e4e4" stroke-width="1" stroke-dasharray="2 2"/></svg>
<div class="t" style="left:278.2px;top:537px;font-size:11.7px;line-height:13px;color:#555;font-weight:normal;">27.3 KB/s</div>
<div class="t" style="left:282px;top:676px;font-size:12px;line-height:14px;color:#555;font-weight:normal;">10min</div>
<svg class="r" style="left:0px;top:0px;overflow:visible" width="1202" height="851" viewBox="0 0 1202 851"><defs><linearGradient id="rg" x1="0" y1="0" x2="0" y2="1"><stop offset="0" stop-color="#8fcc50" stop-opacity="0.55"/><stop offset="1" stop-color="#c8e8a8" stop-opacity="0.25"/></linearGradient></defs><polygon points="281.1,665.3 287.6,648.2 295.1,667.0 301.2,668.8 307.3,667.4 315.2,662.7 322.2,666.2 329.2,664.4 336.1,665.3 341.4,666.7 350.1,670.5 362.4,668.8 372.8,665.7 383.3,666.7 392.0,665.3 400.8,666.7 411.3,671.4 418.3,665.3 425.2,670.2 432.2,668.0 439.2,664.4 449.7,665.3 460.2,664.4 466.3,662.7 473.3,669.1 488.7,668.8 501.0,665.0 508.0,666.2 516.7,665.7 527.2,667.0 541.1,670.5 549.9,669.7 562.1,665.7 576.1,666.7 595.3,670.2 604.0,669.3 616.3,670.9 624.1,667.4 631.1,670.2 638.1,665.3 644.2,664.4 658.2,668.8 666.1,662.7 673.9,665.0 685.3,665.8 685.3,674 281.1,674" fill="url(#rg)"/><polyline points="281.1,665.3 287.6,648.2 295.1,667.0 301.2,668.8 307.3,667.4 315.2,662.7 322.2,666.2 329.2,664.4 336.1,665.3 341.4,666.7 350.1,670.5 362.4,668.8 372.8,665.7 383.3,666.7 392.0,665.3 400.8,666.7 411.3,671.4 418.3,665.3 425.2,670.2 432.2,668.0 439.2,664.4 449.7,665.3 460.2,664.4 466.3,662.7 473.3,669.1 488.7,668.8 501.0,665.0 508.0,666.2 516.7,665.7 527.2,667.0 541.1,670.5 549.9,669.7 562.1,665.7 576.1,666.7 595.3,670.2 604.0,669.3 616.3,670.9 624.1,667.4 631.1,670.2 638.1,665.3 644.2,664.4 658.2,668.8 666.1,662.7 673.9,665.0 685.3,665.8" fill="none" stroke="#78be22" stroke-width="2.1" stroke-linejoin="round"/><polyline points="281.1,658.3 287.6,573.6 294.6,630.4 301.2,625.5 308.2,627.2 316.9,618.5 327.4,623.4 335.3,620.8 350.1,633.5 362.4,633.0 370.2,591.9 377.2,624.2 385.1,625.1 395.5,622.0 411.3,631.8 418.3,622.0 426.1,630.7 433.1,625.1 443.6,622.5 452.3,661.0 459.3,623.4 465.4,620.2 474.2,632.1 487.0,632.1 501.0,624.2 507.1,624.2 514.9,619.9 521.9,625.5 534.2,627.7 542.9,633.0 548.1,633.0 555.1,624.8 563.9,623.7 576.1,624.2 583.1,630.4 595.3,632.1 604.0,630.4 612.8,634.2 618.0,633.5 630.2,630.4 637.2,619.0 644.2,585.0 651.2,624.2 658.2,629.5 666.1,628.6 673.9,619.9 685.3,623.7" fill="none" stroke="#2a8ad8" stroke-width="2.3" stroke-dasharray="2.2 2.3" stroke-linejoin="round"/></svg>
<svg class="r" style="left:568.1px;top:681.1px;overflow:visible" width="10.8" height="10.8" viewBox="0 0 10.8 10.8"><circle cx="5.4" cy="5.4" r="4.4" fill="#74be1e"/></svg>
<div class="t" style="left:581.5px;top:679px;font-size:11.8px;line-height:14px;color:#444;font-weight:normal;">Received</div>
<svg class="r" style="left:635px;top:682px;overflow:visible" width="10" height="10" viewBox="0 0 10 10"><rect x="0.5" y="0.5" width="9" height="9" fill="none" stroke="#7ab0e0" stroke-width="1" stroke-dasharray="2 1.5"/></svg>
<div class="t" style="left:647.5px;top:679px;font-size:11.8px;line-height:14px;color:#444;font-weight:normal;">Sent</div>
<div class="t" style="left:677.5px;top:677px;font-size:10.5px;line-height:12px;color:#666;font-weight:normal;">0</div>
<div class="r" style="left:281px;top:705px;width:3px;height:48px;background:#7cc12a;"></div>
<svg class="r" style="left:416px;top:705px;overflow:visible" width="3" height="48" viewBox="0 0 3 48"><line x1="1.5" y1="0" x2="1.5" y2="48" stroke="#2a8ad8" stroke-width="3" stroke-dasharray="3 3"/></svg>
<div class="t" style="left:294.5px;top:706px;font-size:11.3px;line-height:12px;color:#777;font-weight:normal;">Received</div>
<div class="t" style="left:294.5px;top:726px;font-size:21.5px;line-height:24px;color:#111;font-weight:normal;">1.9</div>
<div class="t" style="left:330.3px;top:733px;font-size:13px;line-height:15px;color:#111;font-weight:normal;">KB/s</div>
<div class="t" style="left:429.1px;top:706px;font-size:11.3px;line-height:12px;color:#777;font-weight:normal;">Sent</div>
<div class="t" style="left:429.5px;top:726px;font-size:21.3px;line-height:24px;color:#111;font-weight:normal;">11.3</div>
<div class="t" style="left:477px;top:733px;font-size:13px;line-height:15px;color:#111;font-weight:normal;">KB/s</div>
<div class="r" style="left:729px;top:523px;width:464px;height:29px;background:#7e8496;"></div>
<div class="r" style="left:921px;top:523px;width:1px;height:29px;background:#aeb4c2;"></div>
<div class="r" style="left:1036px;top:523px;width:1px;height:29px;background:#aeb4c2;"></div>
<div class="t" style="left:743.3px;top:532px;font-size:11px;line-height:12px;color:#fff;font-weight:normal;">Process Name</div>
<svg class="r" style="left:905px;top:537px;overflow:visible" width="7" height="5" viewBox="0 0 7 5"><path d="M0.5 0.5 H6.5 L3.5 4.5 Z" fill="#fff"/></svg>
<div class="t" style="right:182px;text-align:right;top:532px;font-size:11px;line-height:12px;color:#fff;font-weight:normal;">CPU Usage</div>
<div class="t" style="right:27px;text-align:right;top:532px;font-size:11px;line-height:12px;color:#fff;font-weight:normal;">Memory</div>
<div class="r" style="left:729px;top:552px;width:464px;height:221px;background:#eeeeee;"></div>
<div class="r" style="left:729px;top:581px;width:464px;height:1px;background:#cdcdcd;"></div>
<div class="r" style="left:729px;top:582px;width:464px;height:1px;background:#fafafa;"></div>
<div class="t" style="left:760.3px;top:561px;font-size:10.9px;line-height:12px;color:#333;font-weight:normal;">Web Server (8)</div>
<div class="t" style="right:179px;text-align:right;top:561px;font-size:10.9px;line-height:12px;color:#333;font-weight:normal;">0 %</div>
<div class="t" style="right:43.700000000000045px;text-align:right;top:561px;font-size:10.9px;line-height:12px;color:#333;font-weight:normal;">60.1 MB</div>
<svg class="r" style="left:1169px;top:563px;overflow:visible" width="12" height="8" viewBox="0 0 12 8"><path d="M1 1.5 L6 6.5 L11 1.5" fill="none" stroke="#555" stroke-width="1.3"/></svg>
<div class="r" style="left:729px;top:611px;width:464px;height:1px;background:#cdcdcd;"></div>
<div class="r" style="left:729px;top:612px;width:464px;height:1px;background:#fafafa;"></div>
<div class="t" style="left:760.3px;top:591px;font-size:10.9px;line-height:12px;color:#333;font-weight:normal;">System Processes (61)</div>
<div class="t" style="right:179px;text-align:right;top:591px;font-size:10.9px;line-height:12px;color:#333;font-weight:normal;">4.19 %</div>
<div class="t" style="right:43.700000000000045px;text-align:right;top:591px;font-size:10.9px;line-height:12px;color:#333;font-weight:normal;">325.5 MB</div>
<svg class="r" style="left:1169px;top:593px;overflow:visible" width="12" height="8" viewBox="0 0 12 8"><path d="M1 1.5 L6 6.5 L11 1.5" fill="none" stroke="#555" stroke-width="1.3"/></svg>
<div class="r" style="left:729px;top:641px;width:464px;height:1px;background:#cdcdcd;"></div>
<div class="r" style="left:729px;top:642px;width:464px;height:1px;background:#fafafa;"></div>
<div class="t" style="left:760.3px;top:621px;font-size:10.9px;line-height:12px;color:#333;font-weight:normal;">System Logs (2)</div>
<div class="t" style="right:179px;text-align:right;top:621px;font-size:10.9px;line-height:12px;color:#333;font-weight:normal;">0 %</div>
<div class="t" style="right:43.700000000000045px;text-align:right;top:621px;font-size:10.9px;line-height:12px;color:#333;font-weight:normal;">6.5 MB</div>
<svg class="r" style="left:1169px;top:623px;overflow:visible" width="12" height="8" viewBox="0 0 12 8"><path d="M1 1.5 L6 6.5 L11 1.5" fill="none" stroke="#555" stroke-width="1.3"/></svg>
<div class="r" style="left:729px;top:671px;width:464px;height:1px;background:#cdcdcd;"></div>
<div class="r" style="left:729px;top:672px;width:464px;height:1px;background:#fafafa;"></div>
<div class="t" style="left:760.3px;top:651px;font-size:10.9px;line-height:12px;color:#333;font-weight:normal;">Rsync (File-Level Backup)&nbsp; (1)</div>
<div class="t" style="right:179px;text-align:right;top:651px;font-size:10.9px;line-height:12px;color:#333;font-weight:normal;">0 %</div>
<div class="t" style="right:43.700000000000045px;text-align:right;top:651px;font-size:10.9px;line-height:12px;color:#333;font-weight:normal;">2.1 MB</div>
<svg class="r" style="left:1169px;top:653px;overflow:visible" width="12" height="8" viewBox="0 0 12 8"><path d="M1 1.5 L6 6.5 L11 1.5" fill="none" stroke="#555" stroke-width="1.3"/></svg>
<div class="r" style="left:729px;top:701px;width:464px;height:1px;background:#cdcdcd;"></div>
<div class="r" style="left:729px;top:702px;width:464px;height:1px;background:#fafafa;"></div>
<div class="t" style="left:760.3px;top:681px;font-size:10.9px;line-height:12px;color:#333;font-weight:normal;">RTRR (Real-time Two-way F…</div>
<div class="t" style="right:179px;text-align:right;top:681px;font-size:10.9px;line-height:12px;color:#333;font-weight:normal;">0 %</div>
<div class="t" style="right:43.700000000000045px;text-align:right;top:681px;font-size:10.9px;line-height:12px;color:#333;font-weight:normal;">5.1 MB</div>
<svg class="r" style="left:1169px;top:683px;overflow:visible" width="12" height="8" viewBox="0 0 12 8"><path d="M1 1.5 L6 6.5 L11 1.5" fill="none" stroke="#555" stroke-width="1.3"/></svg>
<div class="r" style="left:729px;top:731px;width:464px;height:1px;background:#cdcdcd;"></div>
<div class="r" style="left:729px;top:732px;width:464px;height:1px;background:#fafafa;"></div>
<div class="t" style="left:760.3px;top:711px;font-size:10.9px;line-height:12px;color:#333;font-weight:normal;">Qboost (1)</div>
<div class="t" style="right:179px;text-align:right;top:711px;font-size:10.9px;line-height:12px;color:#333;font-weight:normal;">0 %</div>
<div class="t" style="right:43.700000000000045px;text-align:right;top:711px;font-size:10.9px;line-height:12px;color:#333;font-weight:normal;">1.7 MB</div>
<svg class="r" style="left:1169px;top:713px;overflow:visible" width="12" height="8" viewBox="0 0 12 8"><path d="M1 1.5 L6 6.5 L11 1.5" fill="none" stroke="#555" stroke-width="1.3"/></svg>
<div class="r" style="left:729px;top:761px;width:464px;height:1px;background:#cdcdcd;"></div>
<div class="r" style="left:729px;top:762px;width:464px;height:1px;background:#fafafa;"></div>
<div class="t" style="left:760.3px;top:741px;font-size:10.9px;line-height:12px;color:#333;font-weight:normal;">Multimedia Management (8)</div>
<div class="t" style="right:179px;text-align:right;top:741px;font-size:10.9px;line-height:12px;color:#333;font-weight:normal;">0 %</div>
<div class="t" style="right:43.700000000000045px;text-align:right;top:741px;font-size:10.9px;line-height:12px;color:#333;font-weight:normal;">52.0 MB</div>
<svg class="r" style="left:1169px;top:743px;overflow:visible" width="12" height="8" viewBox="0 0 12 8"><path d="M1 1.5 L6 6.5 L11 1.5" fill="none" stroke="#555" stroke-width="1.3"/></svg>
<svg class="r" style="left:743px;top:561px;overflow:visible" width="13" height="13" viewBox="0 0 13 13"><circle cx="6.3" cy="6.3" r="6.2" fill="#3cb2ee"/><path d="M5.2 2.8 Q2.4 6 4.6 9.8" fill="none" stroke="#d6f3ff" stroke-width="1.4"/><path d="M7.6 3.6 Q9.8 5.6 8 7.2 Q6.8 8.6 8.6 10" fill="none" stroke="#d6f3ff" stroke-width="1.2"/></svg>
<svg class="r" style="left:743px;top:591px;overflow:visible" width="13" height="13" viewBox="0 0 13 13"><rect x="-0.8" y="-0.7" width="13.6" height="13.6" rx="1.2" fill="#a2a2a2"/><circle cx="4.6" cy="8.3" r="2.4" fill="none" stroke="#f4f4f4" stroke-width="1.7" stroke-dasharray="1.1 0.8"/><circle cx="4.6" cy="8.3" r="1.6" fill="none" stroke="#f4f4f4" stroke-width="0.7"/><circle cx="8.8" cy="4" r="2.1" fill="none" stroke="#f4f4f4" stroke-width="1.5" stroke-dasharray="1 0.7"/><circle cx="8.8" cy="4" r="1.3" fill="none" stroke="#f4f4f4" stroke-width="0.6"/></svg>
<svg class="r" style="left:743px;top:621px;overflow:visible" width="13" height="13" viewBox="0 0 13 13"><path d="M0 1.8 L1.8 0 H11 V12 H0 Z" fill="#13918a"/><rect x="2.5" y="8" width="6" height="2" fill="#cfeeea"/></svg>
<svg class="r" style="left:743px;top:651px;overflow:visible" width="13" height="13" viewBox="0 0 13 13"><defs><linearGradient id="rsg" x1="0" y1="0" x2="1" y2="1"><stop offset="0" stop-color="#22a6d6"/><stop offset="1" stop-color="#105ea8"/></linearGradient></defs><rect x="-1" y="-1" width="14" height="14" rx="2.6" fill="url(#rsg)"/><circle cx="6.3" cy="6.5" r="4.3" fill="none" stroke="#38d8c8" stroke-width="1.1"/><path d="M6.2 4.2 V6.9 L8 8" stroke="#c8f4f0" stroke-width="0.9" fill="none"/></svg>
<svg class="r" style="left:743px;top:681px;overflow:visible" width="13" height="13" viewBox="0 0 13 13"><rect x="-1" y="-1" width="14" height="14" rx="2.6" fill="url(#rsg)"/><circle cx="6.3" cy="6.5" r="4.3" fill="none" stroke="#38d8c8" stroke-width="1.1"/><path d="M6.2 4.2 V6.9 L8 8" stroke="#c8f4f0" stroke-width="0.9" fill="none"/></svg>
<svg class="r" style="left:743px;top:711px;overflow:visible" width="13" height="13" viewBox="0 0 13 13"><rect x="-0.4" y="-0.4" width="13" height="13" rx="2" fill="#fafafa" stroke="#bdbdbd" stroke-width="0.9"/><rect x="1.5" y="4.2" width="9.5" height="4.6" rx="2" fill="#2a2e34"/><circle cx="4.4" cy="6.5" r="1" fill="#fafafa"/><circle cx="7.6" cy="6.5" r="1" fill="#fafafa"/></svg>
<svg class="r" style="left:743px;top:741px;overflow:visible" width="13" height="13" viewBox="0 0 13 13"><circle cx="6.2" cy="6.5" r="6" fill="#ef6a48"/><path d="M11 2.5 A7 7 0 0 1 11 10.5" fill="none" stroke="#f4a890" stroke-width="0.8"/><circle cx="6.2" cy="3" r="1.1" fill="#fcd4c4"/><circle cx="6.2" cy="10" r="1.1" fill="#fcd4c4"/><circle cx="2.8" cy="5" r="1.1" fill="#fcd4c4"/><circle cx="9.6" cy="5" r="1.1" fill="#fcd4c4"/><circle cx="3.2" cy="8.6" r="1.1" fill="#fcd4c4"/><circle cx="9.2" cy="8.6" r="1.1" fill="#fcd4c4"/><circle cx="6.2" cy="6.5" r="1" fill="#fcd4c4"/></svg>
<div class="r" style="left:729px;top:762px;width:464px;height:11px;background:#eeeeee;"></div>
<svg class="r" style="left:539px;top:814px;overflow:visible" width="22" height="22" viewBox="0 0 22 22"><circle cx="11" cy="10.9" r="9.9" fill="none" stroke="#47433f" stroke-width="1.5"/><path d="M7.2 14.6 A3.4 3.4 0 0 1 6.8 8.3 A4.6 4.6 0 0 1 15.2 7.4 A3.6 3.6 0 0 1 15.6 14.6 H10.6 A2.5 2.5 0 1 1 13.3 10.6" fill="none" stroke="#47433f" stroke-width="1.3"/></svg>
<svg class="r" style="left:575px;top:814px;overflow:visible" width="22" height="22" viewBox="0 0 22 22"><circle cx="11" cy="10.9" r="9.9" fill="none" stroke="#47433f" stroke-width="1.5"/><g transform="translate(8.4,8.2) rotate(-45)"><path d="M-4.6 -1.5 H4.4 V1.4 H1.1 V10.6 H-1.1 V1.4 H-4.6 Z" fill="none" stroke="#47433f" stroke-width="1.25" stroke-linejoin="miter"/></g></svg>
<svg class="r" style="left:611px;top:814px;overflow:visible" width="22" height="22" viewBox="0 0 22 22"><circle cx="11" cy="10.9" r="9.9" fill="none" stroke="#47433f" stroke-width="1.5"/><path d="M5.3 5.8 Q8.2 5.2 11.1 6.2 Q14 5.2 16.7 5.8 V16 Q14 15.5 11.1 16.4 Q8.2 15.5 5.3 16 Z" fill="none" stroke="#47433f" stroke-width="1.6"/><path d="M11.1 6.2 V16.4" stroke="#47433f" stroke-width="1.6"/><path d="M8.2 7.6 V14 M14 7.6 V14" stroke="#47433f" stroke-width="0.8"/></svg>
<svg class="r" style="left:647px;top:814px;overflow:visible" width="22" height="22" viewBox="0 0 22 22"><circle cx="11" cy="10.9" r="9.9" fill="none" stroke="#47433f" stroke-width="1.5"/><path d="M11.2 6.4 H6.3 V16.5 H15.6 V10.6" fill="none" stroke="#47433f" stroke-width="1.7"/><path d="M7.9 8.8 H11 M7.9 11.4 H14.2 M7.9 13.6 H14.2" stroke="#47433f" stroke-width="1.1"/><path d="M12.2 9.3 L16.4 5.4" stroke="#47433f" stroke-width="2.2"/></svg>
<div class="r" style="left:729px;top:552px;width:464px;height:1px;background:#ffffff;"></div>
<div class="r" style="left:0px;top:0px;width:1.3px;height:851px;background:#3078bc;"></div>
</body></html>
